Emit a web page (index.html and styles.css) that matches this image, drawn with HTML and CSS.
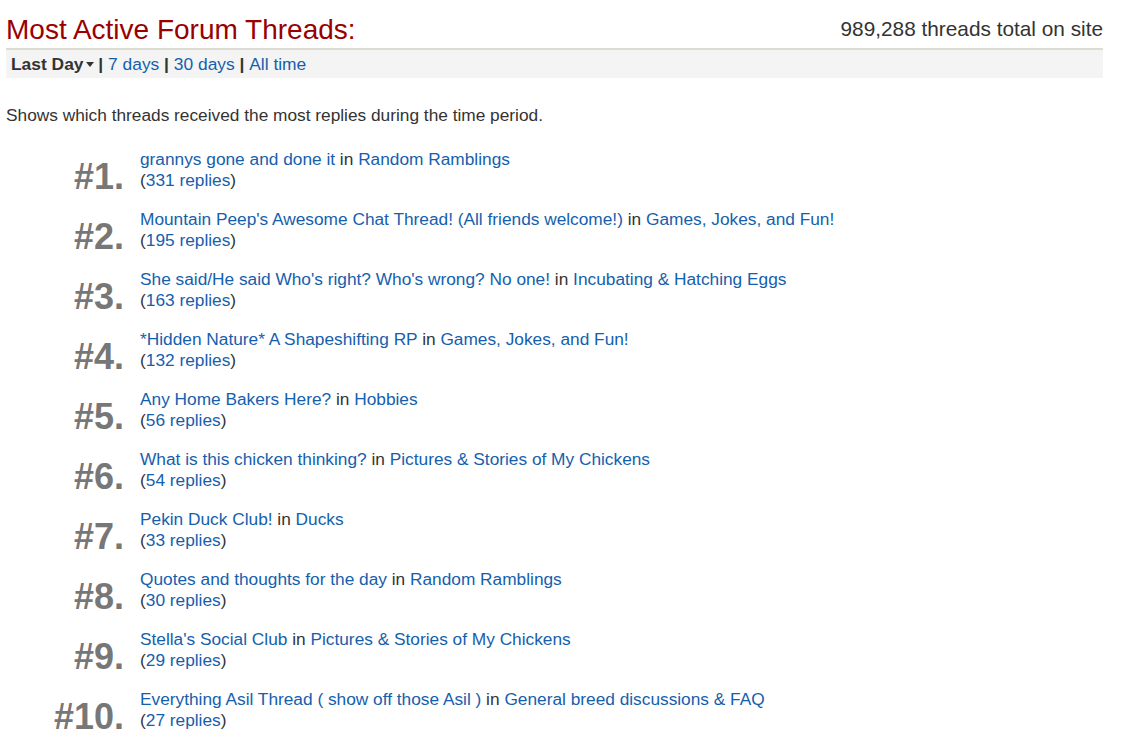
FILE: index.html
```html
<!DOCTYPE html>
<html>
<head>
<meta charset="utf-8">
<link rel="stylesheet" href="styles.css">
</head>
<body>
<div class="page">
  <div class="header">
    <h1 class="title">Most Active Forum Threads:</h1>
    <div class="total">989,288 threads total on site</div>
  </div>
  <div class="tabs">
    <span class="current">Last Day<span class="caret"></span></span> | <a href="#">7 days</a> | <a href="#">30 days</a> | <a href="#">All time</a>
  </div>
  <p class="desc">Shows which threads received the most replies during the time period.</p>
  <ol class="list">
    <li class="item"><span class="rank">#1.</span><div class="info"><div><a href="#">grannys gone and done it</a> in <a href="#">Random Ramblings</a></div><div>(<a href="#">331 replies</a>)</div></div></li>
    <li class="item"><span class="rank">#2.</span><div class="info"><div><a href="#">Mountain Peep's Awesome Chat Thread! (All friends welcome!)</a> in <a href="#">Games, Jokes, and Fun!</a></div><div>(<a href="#">195 replies</a>)</div></div></li>
    <li class="item"><span class="rank">#3.</span><div class="info"><div><a href="#">She said/He said Who's right? Who's wrong? No one!</a> in <a href="#">Incubating &amp; Hatching Eggs</a></div><div>(<a href="#">163 replies</a>)</div></div></li>
    <li class="item"><span class="rank">#4.</span><div class="info"><div><a href="#">*Hidden Nature* A Shapeshifting RP</a> in <a href="#">Games, Jokes, and Fun!</a></div><div>(<a href="#">132 replies</a>)</div></div></li>
    <li class="item"><span class="rank">#5.</span><div class="info"><div><a href="#">Any Home Bakers Here?</a> in <a href="#">Hobbies</a></div><div>(<a href="#">56 replies</a>)</div></div></li>
    <li class="item"><span class="rank">#6.</span><div class="info"><div><a href="#">What is this chicken thinking?</a> in <a href="#">Pictures &amp; Stories of My Chickens</a></div><div>(<a href="#">54 replies</a>)</div></div></li>
    <li class="item"><span class="rank">#7.</span><div class="info"><div><a href="#">Pekin Duck Club!</a> in <a href="#">Ducks</a></div><div>(<a href="#">33 replies</a>)</div></div></li>
    <li class="item"><span class="rank">#8.</span><div class="info"><div><a href="#">Quotes and thoughts for the day</a> in <a href="#">Random Ramblings</a></div><div>(<a href="#">30 replies</a>)</div></div></li>
    <li class="item"><span class="rank">#9.</span><div class="info"><div><a href="#">Stella's Social Club</a> in <a href="#">Pictures &amp; Stories of My Chickens</a></div><div>(<a href="#">29 replies</a>)</div></div></li>
    <li class="item"><span class="rank">#10.</span><div class="info"><div><a href="#">Everything Asil Thread ( show off those Asil )</a> in <a href="#">General breed discussions &amp; FAQ</a></div><div>(<a href="#">27 replies</a>)</div></div></li>
  </ol>
</div>
</body>
</html>
```
FILE: styles.css
```css
html, body {
  margin: 0;
  padding: 0;
  background: #fff;
}
body {
  font-family: "Liberation Sans", Arial, sans-serif;
  color: #333;
}
a {
  color: #1560ad;
  text-decoration: none;
}
.page {
  width: 1097px;
  padding: 0 0 0 6px;
}
.header {
  display: flex;
  justify-content: space-between;
  align-items: flex-end;
  height: 48px;
}
.title {
  margin: 0;
  font-size: 28px;
  font-weight: normal;
  color: #990000;
  line-height: 32px;
  padding-bottom: 2px;
}
.total {
  font-size: 20.8px;
  line-height: 24px;
  padding-bottom: 7px;
  color: #333;
}
.tabs {
  border-top: 2px solid #dcdcd2;
  background: #f4f4f4;
  height: 28px;
  line-height: 28px;
  padding-left: 5px;
  font-size: 17.4px;
  font-weight: bold;
  color: #333;
}
.tabs a {
  font-weight: normal;
}
.current {
  font-weight: bold;
}
.caret {
  display: inline-block;
  width: 0;
  height: 0;
  border-left: 4px solid transparent;
  border-right: 4px solid transparent;
  border-top: 5px solid #333;
  vertical-align: middle;
  margin-left: 2px;
  margin-top: -2px;
}
.desc {
  margin: 27px 0 0 0;
  font-size: 17.3px;
  line-height: 20px;
}
.list {
  list-style: none;
  margin: 24px 0 0 0;
  padding: 0;
}
.item {
  display: flex;
  align-items: flex-start;
  height: 60px;
}
.rank {
  width: 118px;
  text-align: right;
  font-size: 36px;
  font-weight: bold;
  color: #777;
  line-height: 36px;
  margin-top: 10px;
}
.info {
  margin-left: 16px;
  font-size: 17.3px;
  line-height: 21px;
}
```
